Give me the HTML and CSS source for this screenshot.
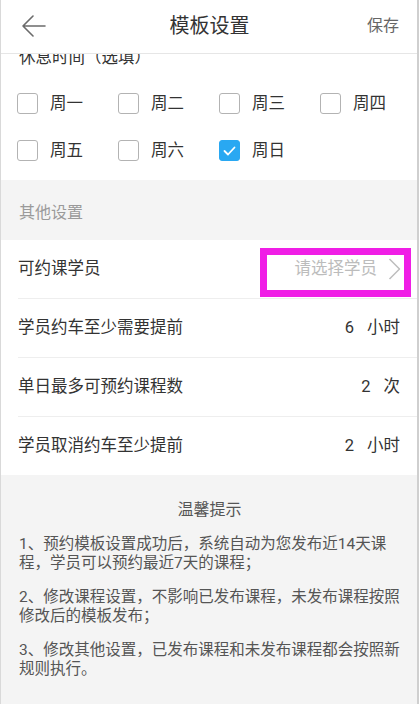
FILE: index.html
```html
<!DOCTYPE html>
<html lang="zh-CN">
<head>
<meta charset="utf-8">
<title>模板设置</title>
<link rel="stylesheet" href="styles.css">
</head>
<body>
<div class="page">
  <header class="topbar">
    <span class="back" aria-label="返回">
      <svg width="24" height="22" viewBox="0 0 24 22"><path d="M11 1 L1 11 L11 21 M1 11 H23" fill="none" stroke="#6b6b6b" stroke-width="1.6" stroke-linecap="round" stroke-linejoin="round"/></svg>
    </span>
    <h1 class="title">模板设置</h1>
    <span class="save">保存</span>
  </header>
  <main class="content">
    <section class="rest">
      <div class="rest-title">休息时间（选填）</div>
      <div class="days">
        <div class="day"><span class="box"></span><span class="day-name">周一</span></div>
        <div class="day"><span class="box"></span><span class="day-name">周二</span></div>
        <div class="day"><span class="box"></span><span class="day-name">周三</span></div>
        <div class="day"><span class="box"></span><span class="day-name">周四</span></div>
        <div class="day"><span class="box"></span><span class="day-name">周五</span></div>
        <div class="day"><span class="box"></span><span class="day-name">周六</span></div>
        <div class="day"><span class="box checked"><svg width="13" height="10" viewBox="0 0 13 10"><path d="M1.5 5 L5 8.5 L11.5 1.5" fill="none" stroke="#fff" stroke-width="1.8" stroke-linecap="round" stroke-linejoin="round"/></svg></span><span class="day-name">周日</span></div>
      </div>
    </section>
    <div class="group-title">其他设置</div>
    <ul class="settings">
      <li class="row">
        <span class="label">可约课学员</span>
        <span class="select"><span class="placeholder">请选择学员</span>
          <svg class="chev" width="13" height="22" viewBox="0 0 13 22"><path d="M1.5 1 L11.5 11 L1.5 21" fill="none" stroke="#bdbdbd" stroke-width="1.5" stroke-linejoin="round"/></svg>
        </span>
        <span class="mark"></span>
      </li>
      <li class="row">
        <span class="label">学员约车至少需要提前</span>
        <span class="value"><span class="num">6</span><span class="unit">小时</span></span>
      </li>
      <li class="row">
        <span class="label">单日最多可预约课程数</span>
        <span class="value"><span class="num">2</span><span class="unit">次</span></span>
      </li>
      <li class="row">
        <span class="label">学员取消约车至少提前</span>
        <span class="value"><span class="num">2</span><span class="unit">小时</span></span>
      </li>
    </ul>
    <section class="tips">
      <h2 class="tips-title">温馨提示</h2>
      <p class="tip"><span class="nowrap">1、预约模板设置成功后，系统自动为您发布近14天课</span><span class="nowrap">程，学员可以预约最近7天的课程；</span></p>
      <p class="tip">2、修改课程设置，不影响已发布课程，未发布课程按照修改后的模板发布；</p>
      <p class="tip">3、修改其他设置，已发布课程和未发布课程都会按照新规则执行。</p>
    </section>
  </main>
</div>
</body>
</html>
```

FILE: styles.css
```css
* { box-sizing: border-box; }
html, body { margin: 0; padding: 0; }
body {
  width: 419px;
  height: 704px;
  overflow: hidden;
  background: #fff;
  font-family: Roboto, "Noto Sans CJK SC", sans-serif;
  color: #333;
}
.page {
  width: 419px;
  height: 704px;
  border-left: 1px solid #d9d9d9;
  border-right: 2px solid #cfcfcf;
  display: flex;
  flex-direction: column;
  overflow: hidden;
}
.topbar {
  height: 54px;
  flex: none;
  border-bottom: 1px solid #e6e6e6;
  display: flex;
  align-items: center;
  padding: 0 18px 0 21px;
  position: relative;
  background: #fff;
}
.back { display: flex; width: 24px; height: 22px; margin-top: -2px; }
.title {
  flex: 1;
  margin: 0;
  text-align: center;
  font-size: 20px;
  font-weight: 400;
  color: #333;
  line-height: 24px;
  margin-top: -1px;
  padding-left: 6px;
}
.save { font-size: 16px; color: #666; line-height: 22px; margin-top: -2px; }

.content { flex: 1; overflow: hidden; }

.rest { padding: 0 0 19px; background: #fff; }
.rest-title {
  margin-top: -6px;
  padding-left: 18px;
  font-size: 16.5px;
  line-height: 20px;
  color: #333;
}
.days {
  display: grid;
  grid-template-columns: repeat(4, 101px);
  row-gap: 26px;
  padding: 25px 0 0 16px;
}
.day { display: flex; align-items: center; height: 21px; }
.box {
  width: 21px;
  height: 21px;
  border: 1.5px solid #b3b3b3;
  border-radius: 3px;
  flex: none;
  display: flex;
  align-items: center;
  justify-content: center;
}
.box.checked { background: #29a8f2; border-color: #29a8f2; }
.day-name { margin-left: 12px; font-size: 16.5px; line-height: 21px; color: #333; }

.group-title {
  height: 60px;
  background: #f4f4f4;
  padding: 23px 18px 0;
  font-size: 16px;
  line-height: 20px;
  color: #9a9a9a;
}

.settings { list-style: none; margin: 0; padding: 0; background: #fff; }
.row {
  height: 59px;
  margin-left: 17px;
  padding-right: 17px;
  border-bottom: 1px solid #eeeeee;
  display: flex;
  align-items: center;
  justify-content: space-between;
  position: relative;
  font-size: 16.5px;
}
.row:last-child { height: 58px; border-bottom: none; }
.label { color: #333; line-height: 20px; }
.select { display: flex; align-items: center; margin-right: -1px; }
.placeholder { color: #bcbcbc; line-height: 20px; }
.chev { margin-left: 11px; }
.value { display: flex; align-items: center; color: #333; line-height: 20px; }
.unit { margin-left: 13px; }
.mark {
  position: absolute;
  left: 242px;
  top: 8px;
  width: 151px;
  height: 49px;
  border: 7px solid #f01ee6;
}

.tips {
  background: #f4f4f4;
  padding: 25px 17px 40px 18px;
  height: 240px;
}
.tips-title {
  margin: 0;
  text-align: center;
  font-size: 16px;
  font-weight: 400;
  line-height: 20px;
  color: #555;
}
.tip {
  margin: 15px 0 0;
  font-size: 15.5px;
  line-height: 19px;
  color: #555;
}
.nowrap { display: block; white-space: nowrap; }
```
